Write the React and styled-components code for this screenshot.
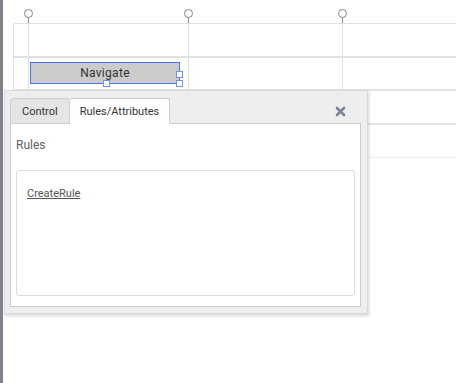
import React from "react"
import styled, { createGlobalStyle } from "styled-components"

const GlobalStyle = createGlobalStyle`
  html, body {
    margin: 0;
    padding: 0;
    background: #ffffff;
    font-family: Roboto, "Liberation Sans", Arial, sans-serif;
  }
`

const Page = styled.div`
  position: relative;
  display: flex;
  width: 456px;
  height: 383px;
  overflow: hidden;
  background: #ffffff;
`

const SideBar = styled.div`
  width: 3px;
  flex: none;
  background: #7f828b;
`

const Workspace = styled.div`
  flex: 1;
  padding-left: 10px;
`

const Guides = styled.div`
  display: grid;
  grid-template-columns: 11px 9px 151px 9px 145px 9px;
  height: 23px;
  padding-top: 9px;
  box-sizing: border-box;
`

const Marker = styled.div`
  display: flex;
  flex-direction: column;
  align-items: center;
  &::before {
    content: "";
    width: 9px;
    height: 9px;
    box-sizing: border-box;
    border: 1.2px solid #858585;
    border-radius: 50%;
  }
  &::after {
    content: "";
    width: 1px;
    height: 5px;
    margin-left: -1px;
    background: #8c8c8c;
  }
`

const Row = styled.div`
  display: flex;
  height: ${p => p.h}px;
  box-sizing: border-box;
  border-top: 1px solid #dde2e2;
  border-bottom: 1px solid ${p => (p.last ? "#eef0f0" : "#dde2e2")};
  border-left: 1px solid #dde2e2;
`

const Cell = styled.div`
  width: ${p => (p.w ? `${p.w}px` : "auto")};
  flex: ${p => (p.w ? "none" : "1")};
  border-left: ${p => (p.first ? "none" : "1px solid #dde2e2")};
  box-sizing: border-box;
`

const ControlBox = styled.div`
  position: relative;
  width: 150px;
  height: 22px;
  margin: 4px 0 0 1px;
  box-sizing: border-box;
  border: 1px solid #4a78e0;
  background: #cbcbcb;
  color: #333;
  font-size: 12px;
  letter-spacing: 0.3px;
  display: flex;
  align-items: center;
  justify-content: center;
`

const Handle = styled.span`
  position: absolute;
  left: ${p => p.x}px;
  top: ${p => p.y}px;
  width: 7px;
  height: 7px;
  box-sizing: border-box;
  background: #ffffff;
  border: 1px solid #6f94f5;
`

const Panel = styled.div`
  position: absolute;
  left: 4px;
  top: 90px;
  width: 364px;
  height: 224px;
  box-sizing: border-box;
  display: flex;
  flex-direction: column;
  padding: 7px 6px 6px 5px;
  background: #eeeeef;
  border: 1px solid #d8d9dc;
  box-shadow: 1px 2px 3px rgba(90, 95, 110, 0.25);
`

const TabBar = styled.div`
  display: flex;
  align-items: stretch;
  height: 26px;
  position: relative;
  z-index: 1;
  margin-bottom: -1px;
`

const Tab = styled.div`
  display: flex;
  align-items: center;
  padding: 0 ${p => (p.active ? 10 : 11)}px;
  font-size: 11px;
  color: #333;
  border: 1px solid #cfcfcf;
  border-left: ${p => (p.active ? "none" : "1px solid #cfcfcf")};
  border-bottom: 1px solid ${p => (p.active ? "#ffffff" : "#cfcfcf")};
  border-radius: 3px 3px 0 0;
  background: ${p => (p.active ? "#ffffff" : "#e5e5e5")};
`

const Close = styled.button`
  margin-left: auto;
  margin-right: 15px;
  align-self: center;
  padding: 0;
  border: none;
  background: none;
  display: flex;
  cursor: pointer;
`

const Body = styled.div`
  flex: 1;
  display: flex;
  flex-direction: column;
  padding: 14px 5px 10px 5px;
  background: #ffffff;
  border: 1px solid #cbcbcb;
`

const Label = styled.div`
  font-size: 12px;
  line-height: 14px;
  color: #5f5f5f;
  margin-bottom: 18px;
`

const RulesBox = styled.div`
  flex: 1;
  padding: 11px 10px;
  border: 1px solid #dcdcdc;
  border-radius: 3px;
`

const Link = styled.a`
  font-size: 11px;
  line-height: 13px;
  color: #555;
  text-decoration: underline;
  cursor: pointer;
`

const CloseIcon = () => (
  <svg width="11" height="11" viewBox="0 0 11 11">
    <path
      d="M2 2 L9 9 M9 2 L2 9"
      stroke="#7b8394"
      strokeWidth="2.6"
      strokeLinecap="round"
      fill="none"
    />
  </svg>
)

const columns = [{ w: 14, first: true }, { w: 160 }, { w: 154 }, {}]

const GridRow = ({ h, last, children }) => (
  <Row h={h} last={last}>
    {columns.map((c, i) => (
      <Cell key={i} w={c.w} first={c.first}>
        {i === 1 ? children : null}
      </Cell>
    ))}
  </Row>
)

export default function App() {
  return (
    <Page>
      <GlobalStyle />
      <SideBar />
      <Workspace>
        <Guides>
          <span />
          <Marker />
          <span />
          <Marker />
          <span />
          <Marker />
        </Guides>
        <GridRow h={34} />
        <GridRow h={33}>
          <ControlBox>
            Navigate
            <Handle x={145} y={8} />
            <Handle x={145} y={17} />
            <Handle x={72} y={17} />
          </ControlBox>
        </GridRow>
        <GridRow h={34} />
        <GridRow h={34} last />
      </Workspace>

      <Panel>
        <TabBar>
          <Tab>Control</Tab>
          <Tab active>Rules/Attributes</Tab>
          <Close aria-label="close">
            <CloseIcon />
          </Close>
        </TabBar>
        <Body>
          <Label>Rules</Label>
          <RulesBox>
            <Link>CreateRule</Link>
          </RulesBox>
        </Body>
      </Panel>
    </Page>
  )
}
